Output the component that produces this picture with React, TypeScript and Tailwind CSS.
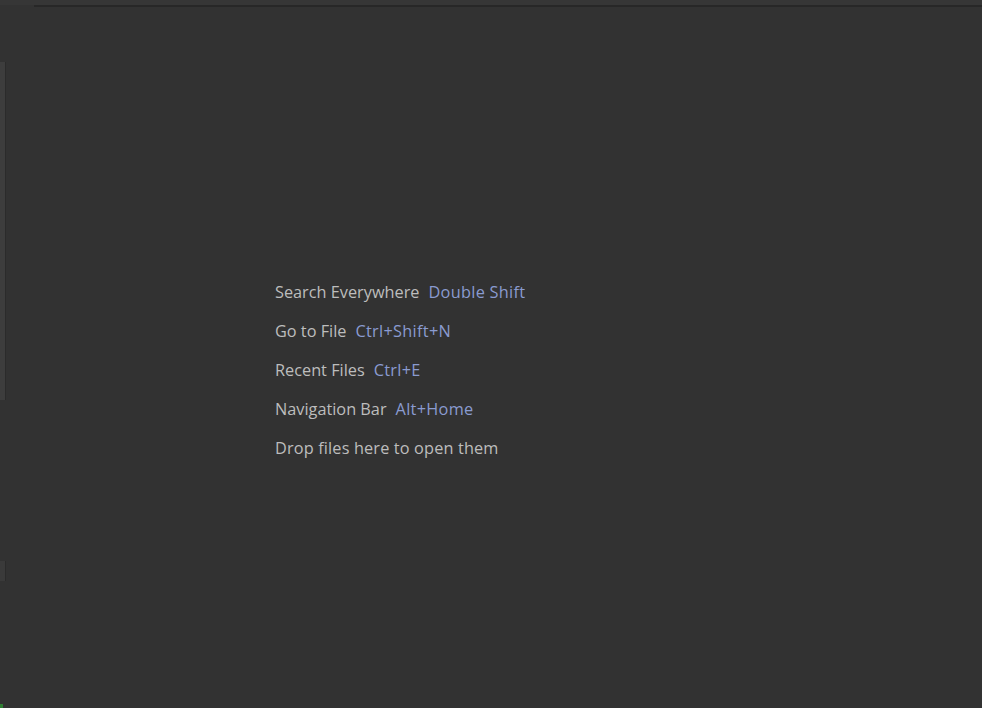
import React from "react";

const items: [string, string][] = [
  ["Search Everywhere", "Double Shift"],
  ["Go to File", "Ctrl+Shift+N"],
  ["Recent Files", "Ctrl+E"],
  ["Navigation Bar", "Alt+Home"],
];

export default function App() {
  return (
    <div className="relative w-[982px] h-[708px] overflow-hidden bg-[#323232] flex flex-col" style={{ fontFamily: '"Open Sans", "Noto Sans", sans-serif' }}>
      <div className="h-[5px] bg-[#363636] shrink-0" />
      <div className="h-[2px] bg-[#272727] shrink-0 ml-[34px]" />
      <div className="flex-1 flex">
        <div className="w-[6px] flex flex-col">
          <div className="h-[55px]" />
          <div className="h-[338px] bg-[#3d3d3d] border-r border-[#2b2b2b]" />
          <div className="h-[161px]" />
          <div className="h-[20px] bg-[#3a3a3a] border-r border-[#2b2b2b]" />
        </div>
        <div className="flex-1 pl-[269px] pt-[274px]">
          <div className="flex flex-col gap-[17px] text-[16.3px] leading-[22px] text-[#bdbdbd]">
            {items.map(([a, b]) => (
              <div key={a} className="flex gap-[9px]">
                <span>{a}</span>
                <span className="text-[#8a9bd0] tracking-[0.3px]">{b}</span>
              </div>
            ))}
            <div className="tracking-[0.15px]">Drop files here to open them</div>
          </div>
        </div>
      </div>
      <div className="absolute left-0 bottom-0 w-[3px] h-[4px] bg-[#2e7d32]" />
    </div>
  );
}
